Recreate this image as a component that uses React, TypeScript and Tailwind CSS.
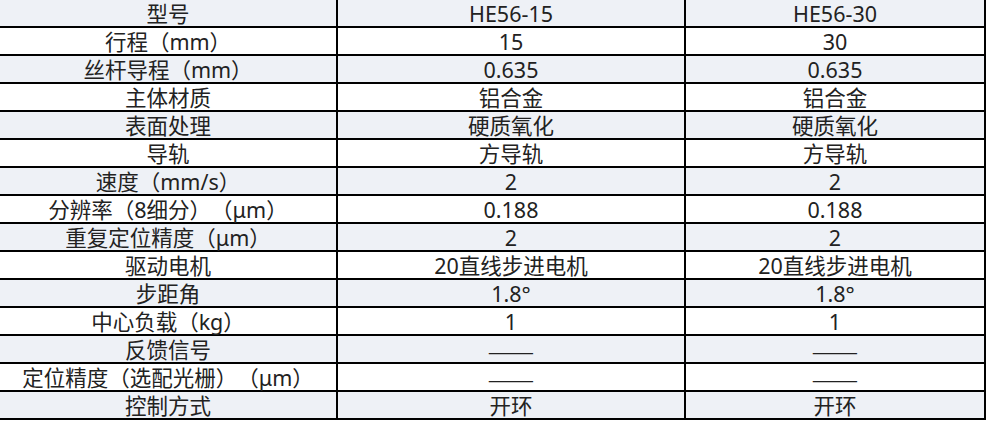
const ROWS: [string, string, string][] = [
  ["型号", "HE56-15", "HE56-30"],
  ["行程（mm）", "15", "30"],
  ["丝杆导程（mm）", "0.635", "0.635"],
  ["主体材质", "铝合金", "铝合金"],
  ["表面处理", "硬质氧化", "硬质氧化"],
  ["导轨", "方导轨", "方导轨"],
  ["速度（mm/s）", "2", "2"],
  ["分辨率（8细分）（μm）", "0.188", "0.188"],
  ["重复定位精度（μm）", "2", "2"],
  ["驱动电机", "20直线步进电机", "20直线步进电机"],
  ["步距角", "1.8°", "1.8°"],
  ["中心负载（kg）", "1", "1"],
  ["反馈信号", "——", "——"],
  ["定位精度（选配光栅）（μm）", "——", "——"],
  ["控制方式", "开环", "开环"],
];

export default function App() {
  return (
    <div className="w-[986px] h-[421px] bg-white font-['Noto_Sans','Noto_Sans_CJK_SC',sans-serif] text-[21.5px] text-[#222] [text-spacing-trim:space-all]">
      <div className="grid grid-cols-[338px_348px_300px]">
        {ROWS.map((row, i) =>
          row.map((cell, j) => (
            <div
              key={`${i}-${j}`}
              className={`h-[28px] border-b-2 border-r-2 border-black flex items-end justify-center leading-[24px] whitespace-nowrap ${
                i % 2 === 0 ? "bg-[#eef1f6]" : "bg-white"
              }`}
            >
              {cell === "——" ? (
                <span className="inline-block font-['Noto_Sans_CJK_SC',sans-serif] leading-[20px] scale-x-[1.3] translate-y-[-1px]">
                  {cell}
                </span>
              ) : (
                cell
              )}
            </div>
          ))
        )}
      </div>
    </div>
  );
}
